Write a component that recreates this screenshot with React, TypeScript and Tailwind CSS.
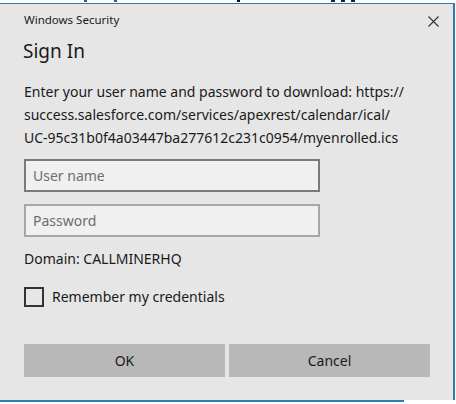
import React from "react";

export default function App() {
  const font = { fontFamily: '"Noto Sans", "Open Sans", sans-serif' };
  return (
    <div className="w-[456px] h-[404px] bg-white overflow-hidden relative" style={font}>
      <div className="h-[3px] bg-white relative">
        <span className="absolute left-[84px] top-0 w-[3px] h-[2px] bg-[#555]" />
        <span className="absolute left-[114px] top-0 w-[3px] h-[2px] bg-[#555]" />
        <span className="absolute left-[237px] top-0 w-[3px] h-[2px] bg-[#111]" />
        <span className="absolute left-[331px] top-0 w-[4px] h-[2px] bg-[#222]" />
        <span className="absolute left-[341px] top-0 w-[4px] h-[2px] bg-[#222]" />
        <span className="absolute left-[351px] top-0 w-[4px] h-[2px] bg-[#222]" />
      </div>
      <div className="w-[455px] h-[397px] bg-[#e6e6e6] border-t border-r-2 border-[#2f7bb5] flex flex-col">
        <div className="flex items-center justify-between pl-[24px] pr-[14px] pt-[6px] h-[26px]">
          <span className="text-[11.5px] text-[#1a1a1a]">Windows Security</span>
          <svg width="11" height="11" viewBox="0 0 11 11" className="mt-[2px]">
            <path d="M0.5 0.5 L10.5 10.5 M10.5 0.5 L0.5 10.5" stroke="#333" strokeWidth="1.1" />
          </svg>
        </div>
        <div className="pl-[23px] mt-[8px] text-[19px] leading-[26px] text-[#1a1a1a]">Sign In</div>
        <div className="pl-[24px] pr-[30px] mt-[16px] text-[14px] leading-[23px] text-[#1a1a1a]">
          Enter your user name and password to download: https://
          <br />
          success.salesforce.com/services/apexrest/calendar/ical/
          <br />
          UC-95c31b0f4a03447ba277612c231c0954/myenrolled.ics
        </div>
        <div className="pl-[24px] mt-[10px] flex flex-col gap-[12px]">
          <div className="w-[296px] h-[33px] border-2 border-[#7a7a7a] bg-[#f0f0f0] flex items-center pl-[7px] text-[14px] text-[#6e6e6e]">
            User name
          </div>
          <div className="w-[296px] h-[33px] border-2 border-[#a8a8a8] bg-[#f0f0f0] flex items-center pl-[7px] text-[14px] text-[#6e6e6e]">
            Password
          </div>
        </div>
        <div className="pl-[24px] mt-[12px] text-[14px] leading-[20px] text-[#1a1a1a]">Domain: CALLMINERHQ</div>
        <div className="pl-[24px] mt-[17px] flex items-center gap-[8px]">
          <div className="w-[20px] h-[20px] border-2 border-[#333] bg-transparent" />
          <span className="text-[14px] text-[#1a1a1a]">Remember my credentials</span>
        </div>
        <div className="pl-[24px] mt-[37px] flex gap-[4px]">
          <div className="w-[201px] h-[33px] bg-[#b8b8b8] flex items-center justify-center text-[14px] text-[#1a1a1a]">OK</div>
          <div className="w-[201px] h-[33px] bg-[#b8b8b8] flex items-center justify-center text-[14px] text-[#1a1a1a]">Cancel</div>
        </div>
      </div>
      <div className="w-[404px] h-[2px] bg-[#2f7bb5]" />
    </div>
  );
}
